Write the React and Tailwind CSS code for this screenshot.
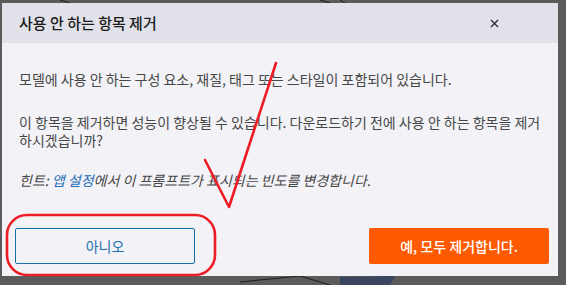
import { X } from 'lucide-react';

export default function App() {
  return (
    <div className="relative h-[285px] w-[566px] overflow-hidden bg-[#5b5b5b] pl-[2px] pt-[3px] font-['Noto_Sans_CJK_KR','Noto_Sans',sans-serif]">
      <Backdrop />
      <div className="relative flex h-[273px] w-[556px] flex-col bg-[#f2f2f7]">
        <div className="flex h-[40px] items-center justify-between bg-[#e0e1e9] pl-[17px] pr-[57px]">
          <h2 className="text-[15px] font-medium text-[#1c1c1c]">사용 안 하는 항목 제거</h2>
          <X size={13} strokeWidth={2} className="text-[#222]" />
        </div>

        <div className="pl-[17px] pr-[12px] pt-[27px] text-[14px] leading-[18px] text-[#474747]">
          <p>모델에 사용 안 하는 구성 요소, 재질, 태그 또는 스타일이 포함되어 있습니다.</p>
          <p className="mt-[25px]">이 항목을 제거하면 성능이 향상될 수 있습니다. 다운로드하기 전에 사용 안 하는 항목을 제거하시겠습니까?</p>
          <p className="mt-[22px] italic">
            힌트: <a href="#" className="text-[#1d6fb5]">앱 설정</a>에서 이 프롬프트가 표시되는 빈도를 변경합니다.
          </p>
        </div>

        <div className="mt-auto flex justify-between pb-[12px] pl-[13px] pr-[9px]">
          <button className="h-[36px] w-[180px] rounded-[2px] border border-[#1a6fb0] text-[14px] text-[#1a6fb0]">아니오</button>
          <button className="h-[36px] w-[180px] rounded-[2px] bg-[#ff5a00] text-[14px] font-medium text-white">예, 모두 제거합니다.</button>
        </div>
      </div>
      <Annotation />
    </div>
  );
}

const Backdrop = () => (
  <svg className="absolute inset-0" width="566" height="285" viewBox="0 0 566 285">
    <g stroke="#1e1e1e" strokeWidth="1" fill="none">
      <path d="M240 282 L300 276 L330 285" />
      <path d="M60 0 L70 3" />
      <path d="M320 0 L330 3 M340 0 L345 3" />
    </g>
    <path d="M340 277 L395 276 L390 285 L340 285 Z" fill="#3a4660" />
  </svg>
);

const Annotation = () => (
  <svg className="pointer-events-none absolute inset-0" width="566" height="285" viewBox="0 0 566 285">
    <g stroke="#ee1c24" strokeWidth="2.6" fill="none" strokeLinecap="round" strokeLinejoin="round">
      <path d="M205 160 L229 207 L276 63" />
      <rect x="7" y="215" width="208" height="60" rx="20" />
    </g>
  </svg>
);
